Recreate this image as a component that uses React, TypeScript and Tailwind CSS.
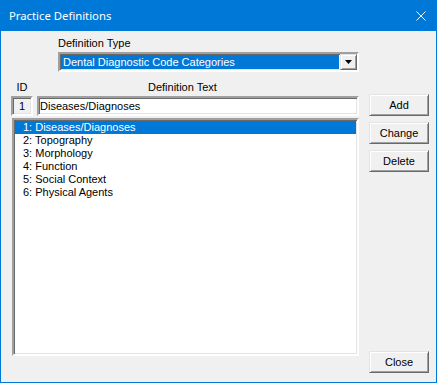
import React from "react";

const sunken =
  "border-2 border-t-[#a0a0a0] border-l-[#a0a0a0] border-b-white border-r-white shadow-[inset_1px_1px_0_#696969,inset_-1px_-1px_0_#e3e3e3]";
const raised =
  "border border-t-[#e3e3e3] border-l-[#e3e3e3] border-b-[#696969] border-r-[#696969] shadow-[inset_1px_1px_0_#ffffff,inset_-1px_-1px_0_#a0a0a0]";

function Btn({ label }: { label: string }) {
  return (
    <div className={`h-[22px] w-[60px] bg-[#f0f0f0] flex items-center justify-center text-black ${raised}`}>
      {label}
    </div>
  );
}

export default function App() {
  const items = [
    "1: Diseases/Diagnoses",
    "2: Topography",
    "3: Morphology",
    "4: Function",
    "5: Social Context",
    "6: Physical Agents",
  ];
  return (
    <div className="w-[437px] h-[383px] flex flex-col font-['Liberation_Sans',Arial,sans-serif] text-[11px] leading-[13px] text-black">
      <div className="h-[31px] shrink-0 bg-[#0078d7] flex items-center justify-between pl-[9px] pr-[11px] text-white">
        <span className="font-['Noto_Sans',sans-serif] text-[11.3px] leading-[16px]">Practice Definitions</span>
        <svg width="10" height="10" viewBox="0 0 10 10">
          <path d="M0.5 0.5 L9.5 9.5 M9.5 0.5 L0.5 9.5" stroke="white" strokeWidth="1" fill="none" />
        </svg>
      </div>
      <div className="flex-1 flex bg-[#f0f0f0] border-x border-b border-[#0078d7] pl-[10px]">
        <div className="w-[348px] flex flex-col">
          <div className="mt-[6px] ml-[47px] h-[13px]">Definition Type</div>
          <div className={`mt-[2px] ml-[47px] w-[301px] h-[20px] bg-white flex ${sunken}`}>
            <div className="flex-1 p-[1px]">
              <div className="h-full bg-[#0078d7] text-white flex items-center pl-[2px]">
                Dental Diagnostic Code Categories
              </div>
            </div>
            <div className={`w-[17px] h-full bg-[#f0f0f0] flex items-center justify-center ${raised}`}>
              <svg width="7" height="4" viewBox="0 0 7 4">
                <path d="M0 0 H7 L3.5 4 Z" fill="black" />
              </svg>
            </div>
          </div>
          <div className="mt-[9px] h-[13px] flex">
            <span className="w-[22px] text-center">ID</span>
            <span className="ml-[115px]">Definition Text</span>
          </div>
          <div className="mt-[2px] flex">
            <div className={`w-[22px] h-[20px] bg-[#f0f0f0] flex items-center justify-center ${sunken}`}>1</div>
            <div className={`ml-[4px] w-[322px] h-[20px] bg-white flex items-center pl-[1px] ${sunken}`}>
              Diseases/Diagnoses
            </div>
          </div>
          <div className={`mt-[2px] ml-[1px] w-[347px] h-[238px] bg-white pt-[1px] px-[1px] ${sunken}`}>
            {items.map((t, i) => (
              <div
                key={t}
                className={`h-[13px] leading-[13px] pl-[8px] ${i === 0 ? "bg-[#0078d7] text-white" : ""}`}
              >
                {t}
              </div>
            ))}
          </div>
        </div>
        <div className="ml-[10px] w-[60px] flex flex-col pt-[63px] pb-[9px]">
          <div className="flex flex-col gap-[6px]">
            <Btn label="Add" />
            <Btn label="Change" />
            <Btn label="Delete" />
          </div>
          <div className="flex-1" />
          <Btn label="Close" />
        </div>
      </div>
    </div>
  );
}
